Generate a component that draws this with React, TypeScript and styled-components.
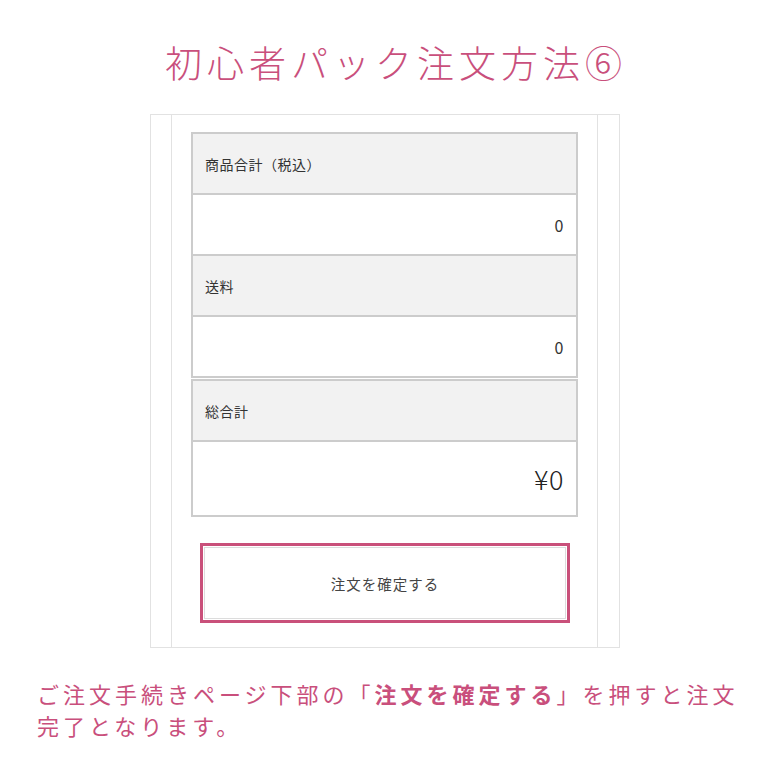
import React from "react";
import styled, { createGlobalStyle } from "styled-components";

const Global = createGlobalStyle`
  html, body { margin: 0; padding: 0; background: #ffffff; }
  body { font-family: "Noto Sans CJK JP", "Noto Sans", sans-serif; }
`;

const PINK = "#c94f7c";

const Page = styled.div`
  width: 770px;
  height: 770px;
  overflow: hidden;
  display: flex;
  flex-direction: column;
  align-items: center;
`;

const Title = styled.h1`
  margin: 37px 0 0;
  padding-left: 22px;
  height: 50px;
  font-size: 37px;
  line-height: 50px;
  font-weight: 300;
  letter-spacing: 5px;
  color: ${PINK};
  text-align: center;
  white-space: nowrap;
`;

const Frame = styled.div`
  margin-top: 27px;
  width: 470px;
  height: 534px;
  box-sizing: border-box;
  border: 1px solid #e2e2e2;
  padding: 0 21px 0 20px;
  display: flex;
`;

const Column = styled.div`
  flex: 1;
  border-left: 1px solid #e2e2e2;
  border-right: 1px solid #e2e2e2;
  padding: 17px 19px 0 19px;
  display: flex;
  flex-direction: column;
`;

const Table = styled.div<{ $gap?: number }>`
  border: 1px solid #cccccc;
  margin-top: ${(p) => p.$gap ?? 0}px;
  display: flex;
  flex-direction: column;
`;

const Cell = styled.div<{ $head?: boolean; $h?: number; $big?: boolean }>`
  height: ${(p) => p.$h ?? 59}px;
  border: 1px solid #cccccc;
  background: ${(p) => (p.$head ? "#f2f2f2" : "#ffffff")};
  display: flex;
  align-items: center;
  justify-content: ${(p) => (p.$head ? "flex-start" : "flex-end")};
  padding: 0 12px;
  font-size: ${(p) => (p.$big ? 27 : p.$head ? 14 : 16)}px;
  font-weight: ${(p) => (p.$big ? 300 : 400)};
  color: ${(p) => (p.$big ? "#222" : "#333")};
  letter-spacing: 0.5px;
`;

const ButtonOuter = styled.button`
  margin: 26px auto 0;
  width: 370px;
  height: 80px;
  box-sizing: border-box;
  border: 3px solid #c9507a;
  padding: 1px;
  background: #fff;
  display: flex;
  cursor: pointer;
`;

const ButtonInner = styled.span`
  flex: 1;
  border: 1px solid #dcdcdc;
  display: flex;
  align-items: center;
  justify-content: center;
  font-family: "Noto Sans CJK JP", sans-serif;
  font-size: 14.5px;
  color: #444;
  letter-spacing: 1px;
  padding-left: 1px;
`;

const Note = styled.p`
  align-self: stretch;
  margin: 29px 0 0;
  padding-left: 37px;
  width: 720px;
  font-size: 22px;
  line-height: 32px;
  letter-spacing: 4px;
  color: ${PINK};
  font-weight: 400;
`;

const Strong = styled.b`
  font-weight: 700;
`;

export default function App() {
  return (
    <>
      <Global />
      <Page>
        <Title>初心者パック注文方法⑥</Title>
        <Frame>
          <Column>
            <Table>
              <Cell $head>商品合計（税込）</Cell>
              <Cell>0</Cell>
              <Cell $head>送料</Cell>
              <Cell>0</Cell>
            </Table>
            <Table $gap={1}>
              <Cell $head>総合計</Cell>
              <Cell $h={73} $big>¥0</Cell>
            </Table>
            <ButtonOuter>
              <ButtonInner>注文を確定する</ButtonInner>
            </ButtonOuter>
          </Column>
        </Frame>
        <Note>
          ご注文手続きページ下部の「<Strong>注文を確定する</Strong>」を押すと注文完了となります。
        </Note>
      </Page>
    </>
  );
}
